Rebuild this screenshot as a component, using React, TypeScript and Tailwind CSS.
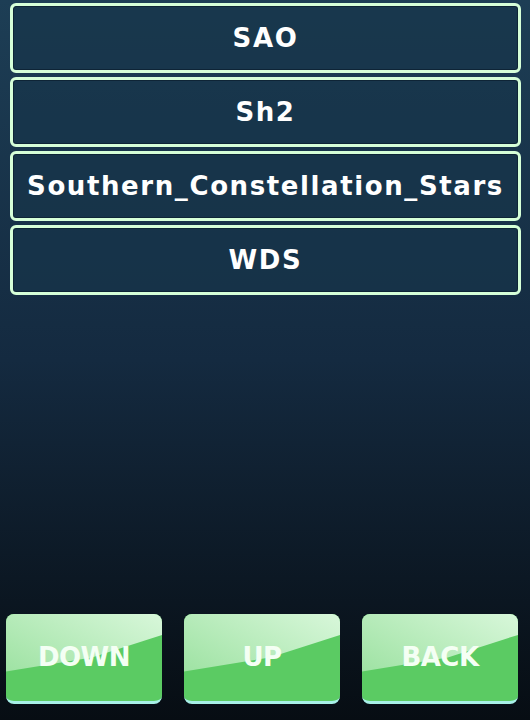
const rows = ['SAO', 'Sh2', 'Southern_Constellation_Stars', 'WDS'];
const buttons = ['DOWN', 'UP', 'BACK'];

export default function App() {
  return (
    <div
      className="w-[530px] h-[720px] flex flex-col bg-gradient-to-b from-[#1d3e55] via-[#142a40] to-[#070d13] overflow-hidden"
      style={{ fontFamily: '"DejaVu Sans", Verdana, sans-serif' }}
    >
      <div className="flex flex-col gap-[4px] pt-[3px] pl-[10px] pr-[9px]">
        {rows.map((r) => (
          <div
            key={r}
            className="h-[70px] rounded-[6px] border-[3px] border-[#d6ffd8] bg-[#17344a]/70 shadow-[inset_0_0_0_1px_#0e2436] flex items-center justify-center"
          >
            <span className="text-white font-bold text-[26px] tracking-[1.6px] whitespace-nowrap">{r}</span>
          </div>
        ))}
      </div>

      <div className="flex-1" />

      <div className="flex justify-between pl-[6px] pr-[12px] pb-[16px] pt-[20px]">
        {buttons.map((b) => (
          <div
            key={b}
            className="relative w-[156px] h-[90px] rounded-[8px] bg-[#5bcb63] border-b-[3px] border-[#a8f0e8] overflow-hidden flex items-center justify-center"
          >
            <div className="absolute inset-0 bg-gradient-to-bl from-[#d8f7da] to-[#92de98] [clip-path:polygon(0_0,100%_0,100%_24%,55%_50%,0_66%)]" />
            <span className="relative text-[#f4fff4] font-bold text-[26px] tracking-[-0.5px]">{b}</span>
          </div>
        ))}
      </div>
    </div>
  );
}
